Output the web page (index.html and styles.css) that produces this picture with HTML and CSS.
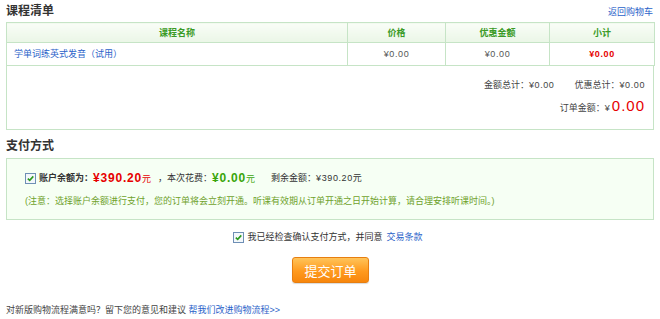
FILE: index.html
```html
<!DOCTYPE html>
<html lang="zh-CN">
<head>
    <meta charset="UTF-8">
    <title>确认订单</title>
    <link rel="stylesheet" href="styles.css">
</head>
<body>
    <div class="page">
        <div class="titlebar">
            <h2>课程清单</h2>
            <a href="#" class="link">返回购物车</a>
        </div>
        <table class="cart">
            <colgroup>
                <col class="c-name"><col class="c-price"><col class="c-off"><col class="c-sub">
            </colgroup>
            <thead>
                <tr><th>课程名称</th><th>价格</th><th>优惠金额</th><th>小计</th></tr>
            </thead>
            <tbody>
                <tr>
                    <td class="name"><a href="#" class="link">学单词练英式发音（试用）</a></td>
                    <td class="num">¥0.00</td>
                    <td class="num">¥0.00</td>
                    <td class="num sub">¥0.00</td>
                </tr>
            </tbody>
        </table>
        <div class="summary">
            <div class="sum-line">
                <span>金额总计：<span class="num">¥0.00</span></span>
                <span>优惠总计：<span class="num">¥0.00</span></span>
            </div>
            <div class="sum-line total">
                <span>订单金额：¥<b class="big">0.00</b></span>
            </div>
        </div>

        <h2 class="sec">支付方式</h2>
        <div class="paybox">
            <div class="pay-line">
                <span class="check"><svg viewBox="0 0 9 9" width="9" height="9"><path d="M1.8 4.6 L3.7 6.4 L7.3 2.4" fill="none" stroke="#2c9a1e" stroke-width="1.6"/></svg></span>
                <b>账户余额为：</b><span class="red"><b class="money">¥390.20</b>元</span>
                <span class="gap">，本次花费：</span><span class="green"><b class="money">¥0.00</b>元</span>
                <span class="left">剩余金额：<span class="num">¥390.20</span>元</span>
            </div>
            <p class="note">(注意：选择账户余额进行支付，您的订单将会立刻开通。听课有效期从订单开通之日开始计算，请合理安排听课时间。)</p>
        </div>

        <div class="agree">
            <span class="check"><svg viewBox="0 0 9 9" width="9" height="9"><path d="M1.8 4.6 L3.7 6.4 L7.3 2.4" fill="none" stroke="#2c9a1e" stroke-width="1.6"/></svg></span>
            我已经检查确认支付方式，并同意 <a href="#" class="link">交易条款</a>
        </div>
        <div class="submit-row">
            <button class="submit">提交订单</button>
        </div>
        <p class="feedback">对新版购物流程满意吗？留下您的意见和建议 <a href="#" class="link">帮我们改进购物流程&gt;&gt;</a></p>
    </div>
</body>
</html>
```
FILE: styles.css
```css
body {
    margin: 0;
    background: #ffffff;
    font-family: "Liberation Sans", "Noto Sans CJK SC", sans-serif;
    font-size: 9px;
    line-height: 12px;
    color: #333333;
}
.page {
    width: 648px;
    padding: 0 6px;
}
.link {
    color: #2a62c9;
    text-decoration: none;
}
.num {
    letter-spacing: 0.6px;
}
.titlebar {
    display: flex;
    justify-content: space-between;
    align-items: flex-end;
    height: 22px;
}
.titlebar h2, .sec {
    margin: 0;
    font-size: 12px;
    font-weight: bold;
    color: #333333;
    line-height: 14px;
}
.titlebar h2 {
    padding-bottom: 4px;
}
.titlebar .link {
    padding-bottom: 4px;
    margin-right: 1px;
}
.cart {
    width: 648px;
    border-collapse: collapse;
    table-layout: fixed;
}
.c-name { width: 341px; }
.c-price { width: 98px; }
.c-off { width: 104px; }
.c-sub { width: 105px; }
.cart th, .cart td {
    border: 1px solid #c6e4c6;
    text-align: center;
    padding: 0;
}
.cart th {
    height: 19px;
    background: linear-gradient(#f9fdf7, #eaf6e6);
    color: #3a9a26;
    font-weight: bold;
}
.cart td {
    height: 22px;
    color: #555555;
}
.cart td.name {
    text-align: left;
    padding-left: 7px;
}
.cart td.sub {
    color: #e60000;
    font-weight: bold;
}
.summary {
    border: 1px solid #c6e4c6;
    border-top: none;
    height: 50px;
    padding: 13px 8px 0 0;
}
.sum-line {
    display: flex;
    justify-content: flex-end;
    gap: 20px;
    color: #444444;
}
.sum-line.total {
    margin-top: 6px;
    line-height: 18px;
}
.big {
    font-size: 15px;
    font-weight: normal;
    color: #e60000;
    margin-left: 2px;
    letter-spacing: 1px;
}
.sec {
    margin-top: 9px;
    line-height: 14px;
}
.paybox {
    margin-top: 5px;
    border: 1px solid #c6e4c6;
    background: #f6fff4;
    height: 60px;
    padding-left: 18px;
}
.pay-line {
    display: flex;
    align-items: center;
    margin-top: 12px;
    height: 14px;
    color: #333333;
}
.pay-line b {
    color: #333333;
}
.check {
    display: inline-flex;
    align-items: center;
    justify-content: center;
    width: 9px;
    height: 9px;
    border: 1px solid #6e8fb5;
    background: #f3f7fb;
    margin-right: 3px;
}
.red, .red b { color: #e60000; }
.green, .green b { color: #3aa50a; }
.money {
    font-size: 12px;
    letter-spacing: 0.8px;
}
.gap {
    margin-left: 7px;
}
.left {
    margin-left: 16px;
}
.note {
    margin: 10px 0 0;
    color: #6fa22c;
}
.agree {
    display: flex;
    align-items: center;
    justify-content: center;
    margin-top: 10px;
    height: 14px;
    color: #333333;
    padding-right: 4px;
}
.agree .link {
    margin-left: 4px;
}
.submit-row {
    display: flex;
    justify-content: center;
    margin-top: 13px;
    padding-left: 1px;
}
.submit {
    width: 77px;
    height: 26px;
    border: 1px solid #e77e10;
    border-radius: 3px;
    background: linear-gradient(#ffc45a, #ff9a1e 55%, #f7860c);
    color: #ffffff;
    font-family: inherit;
    font-size: 13px;
    box-shadow: 0 1px 1px rgba(0, 0, 0, 0.15);
    cursor: pointer;
    padding: 0;
}
.feedback {
    margin: 21px 0 0;
    color: #444444;
}
```
